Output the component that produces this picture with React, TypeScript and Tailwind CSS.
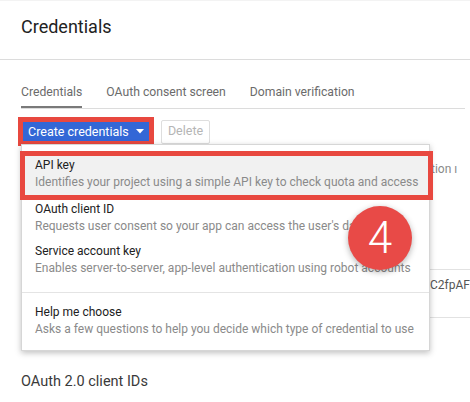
import React from "react";

const FONT = { fontFamily: "Roboto, 'Liberation Sans', Arial, sans-serif" };

function MenuItem({
  title,
  desc,
  className,
}: {
  title: string;
  desc: string;
  className: string;
}) {
  return (
    <div className={`px-[13px] ${className}`}>
      <div className="text-[12px] leading-[17px] text-[#212121]">{title}</div>
      <div className="text-[12px] leading-[17px] text-[#8a8a8a] whitespace-nowrap">{desc}</div>
    </div>
  );
}

export default function App() {
  return (
    <div
      className="relative w-[470px] h-[402px] overflow-hidden bg-white border-t border-[#f3f3f3]"
      style={FONT}
    >
      {/* Header */}
      <div className="h-[59px] border-b border-[#dcdcdc] pl-[21px] pt-[14px]">
        <h1 className="text-[18px] leading-[24px] text-[#222] font-normal">Credentials</h1>
      </div>

      {/* Tabs */}
      <div className="ml-[21px] mr-[5px] pt-[24px] border-b border-[#dcdcdc] flex gap-[24px] text-[12.2px] leading-[16px] text-[#6b6b6b]">
        <div className="pb-[6px] border-b-2 border-[#7a7a7a]">Credentials</div>
        <div className="pb-[6px] border-b-2 border-transparent">OAuth consent screen</div>
        <div className="pb-[6px] border-b-2 border-transparent">Domain verification</div>
      </div>

      {/* Buttons */}
      <div className="ml-[18px] mt-[8px] flex items-center gap-[7px]">
        <div className="w-[136px] h-[29px] border-[5px] border-[#e8483f]">
          <div className="h-full bg-[#3367d6] flex items-center pl-[5px] pr-[5px] text-white text-[12.5px] leading-[16px]">
            <span>Create credentials</span>
            <svg className="ml-auto" width="8" height="5" viewBox="0 0 8 5">
              <polygon points="0,0 8,0 4,4.5" fill="#fff" />
            </svg>
          </div>
        </div>
        <div className="w-[49px] h-[24px] border border-[#dedede] rounded-[2px] flex items-center justify-center text-[12.5px] text-[#b5b5b5]">
          Delete
        </div>
      </div>

      {/* Background content (under the menu) */}
      <div className="mt-[15px] ml-[431px] whitespace-nowrap text-[12px] leading-[16px] text-[#8a8a8a]">
        tion ı
      </div>
      <div className="mt-[92px] ml-[21px] border-t border-b border-[#e2e2e2] pt-[7px] pb-[24px] pl-[409px] whitespace-nowrap text-[12px] leading-[16px] text-[#555]">
        C2fpAF
      </div>
      <div className="mt-[54px] ml-[21px] text-[14.5px] leading-[20px] text-[#3a3a3a]">OAuth 2.0 client IDs</div>

      {/* Dropdown menu */}
      <div className="absolute left-[21px] top-[143px] w-[409px] h-[207px] bg-white border border-[#d6d6d6] shadow-[0_2px_6px_rgba(0,0,0,0.25)] pt-[6px]">
        <div className="relative bg-[#f1f1f1]">
          <MenuItem
            title="API key"
            desc="Identifies your project using a simple API key to check quota and access"
            className="pt-[6px] pb-[4px]"
          />
          <div className="absolute -left-[2px] -right-[4px] top-0 -bottom-[5px] border-[5px] border-[#e8483f]" />
        </div>
        <MenuItem
          title="OAuth client ID"
          desc="Requests user consent so your app can access the user's data"
          className="pt-[6px] pb-[2px]"
        />
        <MenuItem
          title="Service account key"
          desc="Enables server-to-server, app-level authentication using robot accounts"
          className="pt-[6px] pb-[3px]"
        />
        <div className="mt-[12px] border-t border-[#e4e4e4]" />
        <MenuItem
          title="Help me choose"
          desc="Asks a few questions to help you decide which type of credential to use"
          className="pt-[11px]"
        />
      </div>

      {/* Step badge */}
      <div className="absolute left-[348px] top-[205px] w-[64px] h-[64px] rounded-full bg-[#e84a47] shadow-[0_2px_6px_rgba(0,0,0,0.3)] flex items-center justify-center">
        <span className="text-white text-[44px] leading-none font-light">4</span>
      </div>
    </div>
  );
}
